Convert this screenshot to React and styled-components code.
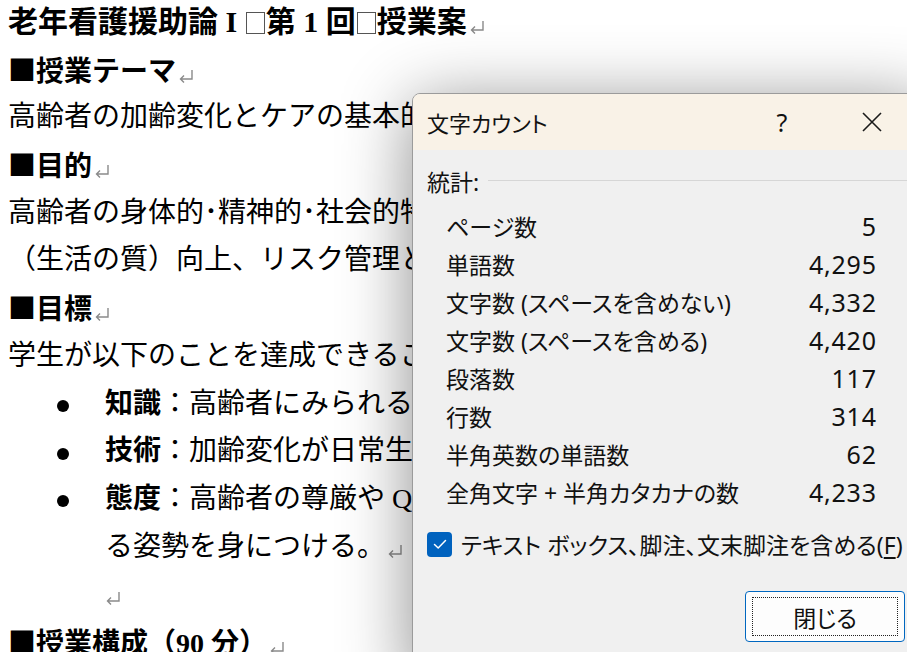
import React from "react";
import styled, { createGlobalStyle } from "styled-components";

const Global = createGlobalStyle`
  html, body { margin: 0; padding: 0; background: #ffffff; overflow: hidden; }
  #root { width: 907px; height: 652px; }
`;

const Screen = styled.div`
  position: relative;
  width: 907px;
  height: 652px;
  overflow: hidden;
  background: #ffffff;
`;

const Doc = styled.div`
  margin-top: -2px;
  padding-left: 8px;
  font-family: "Liberation Serif", "Noto Sans CJK JP", serif;
  color: #000;
`;

const Para = styled.div`
  font-size: ${(p) => (p.$title ? 30 : 28)}px;
  font-weight: ${(p) => (p.$bold ? 700 : 400)};
  line-height: 47.7px;
  height: 47.7px;
  white-space: nowrap;
  padding-left: ${(p) => p.$indent || 0}px;
`;

const Strong = styled.span`
  font-weight: 700;
`;

const Square = styled.span`
  font-family: "Noto Sans CJK JP", sans-serif;
  font-weight: 400;
`;

const Tofu = styled.span`
  display: inline-block;
  width: 19px;
  height: 22px;
  border: 1px solid #555;
  box-sizing: border-box;
  vertical-align: -2px;
  margin: 0 1px;
`;

const MarkSvg = styled.svg`
  display: inline-block;
  width: 16px;
  height: 16px;
  margin-left: 2px;
  vertical-align: -3px;
`;

const BulletRow = styled.div`
  display: flex;
  align-items: center;
  height: 47.7px;
  font-size: 28px;
  line-height: 47.7px;
  white-space: nowrap;
`;

const Marker = styled.span`
  width: 97px;
  flex: none;
  display: flex;
  align-items: center;
  padding-left: 49px;
  box-sizing: border-box;
  &::after {
    content: "";
    width: 12px;
    height: 12px;
    border-radius: 50%;
    background: #000;
    margin-top: 5px;
  }
`;

const Dialog = styled.div`
  position: absolute;
  left: 412px;
  top: 93px;
  width: 520px;
  height: 590px;
  box-sizing: border-box;
  border: 1px solid #9b9b9b;
  border-radius: 8px;
  background: #f0f0f0;
  box-shadow: 0 10px 70px rgba(0, 0, 0, 0.45);
  overflow: hidden;
  font-family: "Noto Sans", "Noto Sans CJK JP", sans-serif;
  font-feature-settings: "palt" 1;
  color: #111;
`;

const TitleBar = styled.div`
  height: 56px;
  background: #f9f2e7;
  display: flex;
  align-items: center;
  padding: 0 14px;
`;

const TitleText = styled.div`
  flex: 1;
  font-size: 22px;
  line-height: 30px;
  margin-top: 2px;
`;

const TitleButton = styled.div`
  width: 90px;
  height: 56px;
  display: flex;
  align-items: center;
  justify-content: center;
  font-size: 25px;
  font-family: "Noto Sans", sans-serif;
`;

const Body = styled.div`
  padding: 0 14px;
`;

const GroupHeader = styled.div`
  margin-top: 18px;
  height: 26px;
  display: flex;
  align-items: center;
  gap: 9px;
  font-size: 23px;
  &::after {
    content: "";
    flex: 1;
    height: 1px;
    background: #d6d6d6;
    margin-top: -1px;
  }
`;

const StatGrid = styled.div`
  margin-top: 13px;
  padding: 0 41px 0 19px;
  display: grid;
  grid-template-columns: 1fr auto;
  grid-auto-rows: 38px;
  align-items: center;
  font-size: 23px;
`;

const StatValue = styled.div`
  font-size: 25px;
  letter-spacing: 0.8px;
  margin-right: -0.8px;
  text-align: right;
`;

const CheckRow = styled.div`
  margin-top: 17px;
  height: 32px;
  display: flex;
  align-items: center;
  gap: 9px;
  font-size: 23px;
  white-space: nowrap;
`;

const CheckBox = styled.span`
  width: 25px;
  height: 25px;
  flex: none;
  border-radius: 4px;
  background: #0062be;
  display: flex;
  align-items: center;
  justify-content: center;
`;

const Underline = styled.span`
  text-decoration: underline;
  text-underline-offset: 3px;
`;

const ButtonRow = styled.div`
  margin-top: 31px;
  display: flex;
  justify-content: flex-end;
  padding-right: 12px;
`;

const Button = styled.div`
  width: 160px;
  height: 51px;
  box-sizing: border-box;
  border: 1.5px solid #0067c0;
  border-radius: 4px;
  background: #fdfdfd;
  padding: 5px 6px;
`;

const FocusRing = styled.div`
  height: 100%;
  box-sizing: border-box;
  border: 1px dotted #222;
  display: flex;
  align-items: center;
  justify-content: center;
  font-size: 23px;
`;

const stats = [
  ["ページ数", "5"],
  ["単語数", "4,295"],
  ["文字数 (スペースを含めない)", "4,332"],
  ["文字数 (スペースを含める)", "4,420"],
  ["段落数", "117"],
  ["行数", "314"],
  ["半角英数の単語数", "62"],
  ["全角文字 + 半角カタカナの数", "4,233"],
];

const R = () => (
  <MarkSvg viewBox="0 0 16 16">
    <path d="M14 2 V11 H2.5 M6 7.5 L2.5 11 L6 14.5" stroke="#8a8a8a" strokeWidth="1.4" fill="none" />
  </MarkSvg>
);

export default function App() {
  return (
    <Screen>
      <Global />
      <Doc>
        <Para $title $bold>
          老年看護援助論 I <Tofu />第 1 回<Tofu />授業案<R />
        </Para>
        <Para $bold><Square>■</Square>授業テーマ<R /></Para>
        <Para>高齢者の加齢変化とケアの基本的</Para>
        <Para $bold><Square>■</Square>目的<R /></Para>
        <Para>高齢者の身体的･精神的･社会的特</Para>
        <Para>（生活の質）向上、リスク管理と</Para>
        <Para $bold><Square>■</Square>目標<R /></Para>
        <Para>学生が以下のことを達成できるこ</Para>
        <BulletRow>
          <Marker />
          <span><Strong>知識</Strong>：高齢者にみられる加</span>
        </BulletRow>
        <BulletRow>
          <Marker />
          <span><Strong>技術</Strong>：加齢変化が日常生活</span>
        </BulletRow>
        <BulletRow>
          <Marker />
          <span><Strong>態度</Strong>：高齢者の尊厳や QO</span>
        </BulletRow>
        <Para $indent={97}>る姿勢を身につける。<R /></Para>
        <Para $indent={95}><R /></Para>
        <Para $bold><Square>■</Square>授業構成（90 分）<R /></Para>
      </Doc>

      <Dialog>
        <TitleBar>
          <TitleText>文字カウント</TitleText>
          <TitleButton>?</TitleButton>
          <TitleButton>
            <svg width="22" height="22" viewBox="0 0 22 22">
              <path d="M2 2 L20 20 M20 2 L2 20" stroke="#1a1a1a" strokeWidth="1.6" fill="none" />
            </svg>
          </TitleButton>
        </TitleBar>
        <Body>
          <GroupHeader>統計:</GroupHeader>
          <StatGrid>
            {stats.map(([k, v]) => (
              <React.Fragment key={k}>
                <div>{k}</div>
                <StatValue>{v}</StatValue>
              </React.Fragment>
            ))}
          </StatGrid>
          <CheckRow>
            <CheckBox>
              <svg width="16" height="16" viewBox="0 0 16 16">
                <path d="M2.5 8.5 L6.2 12 L13.5 4.5" stroke="#fff" strokeWidth="1.5" fill="none" strokeLinecap="round" strokeLinejoin="round" />
              </svg>
            </CheckBox>
            <span>テキスト ボックス、脚注、文末脚注を含める(<Underline>F</Underline>)</span>
          </CheckRow>
          <ButtonRow>
            <Button>
              <FocusRing>閉じる</FocusRing>
            </Button>
          </ButtonRow>
        </Body>
      </Dialog>
    </Screen>
  );
}
